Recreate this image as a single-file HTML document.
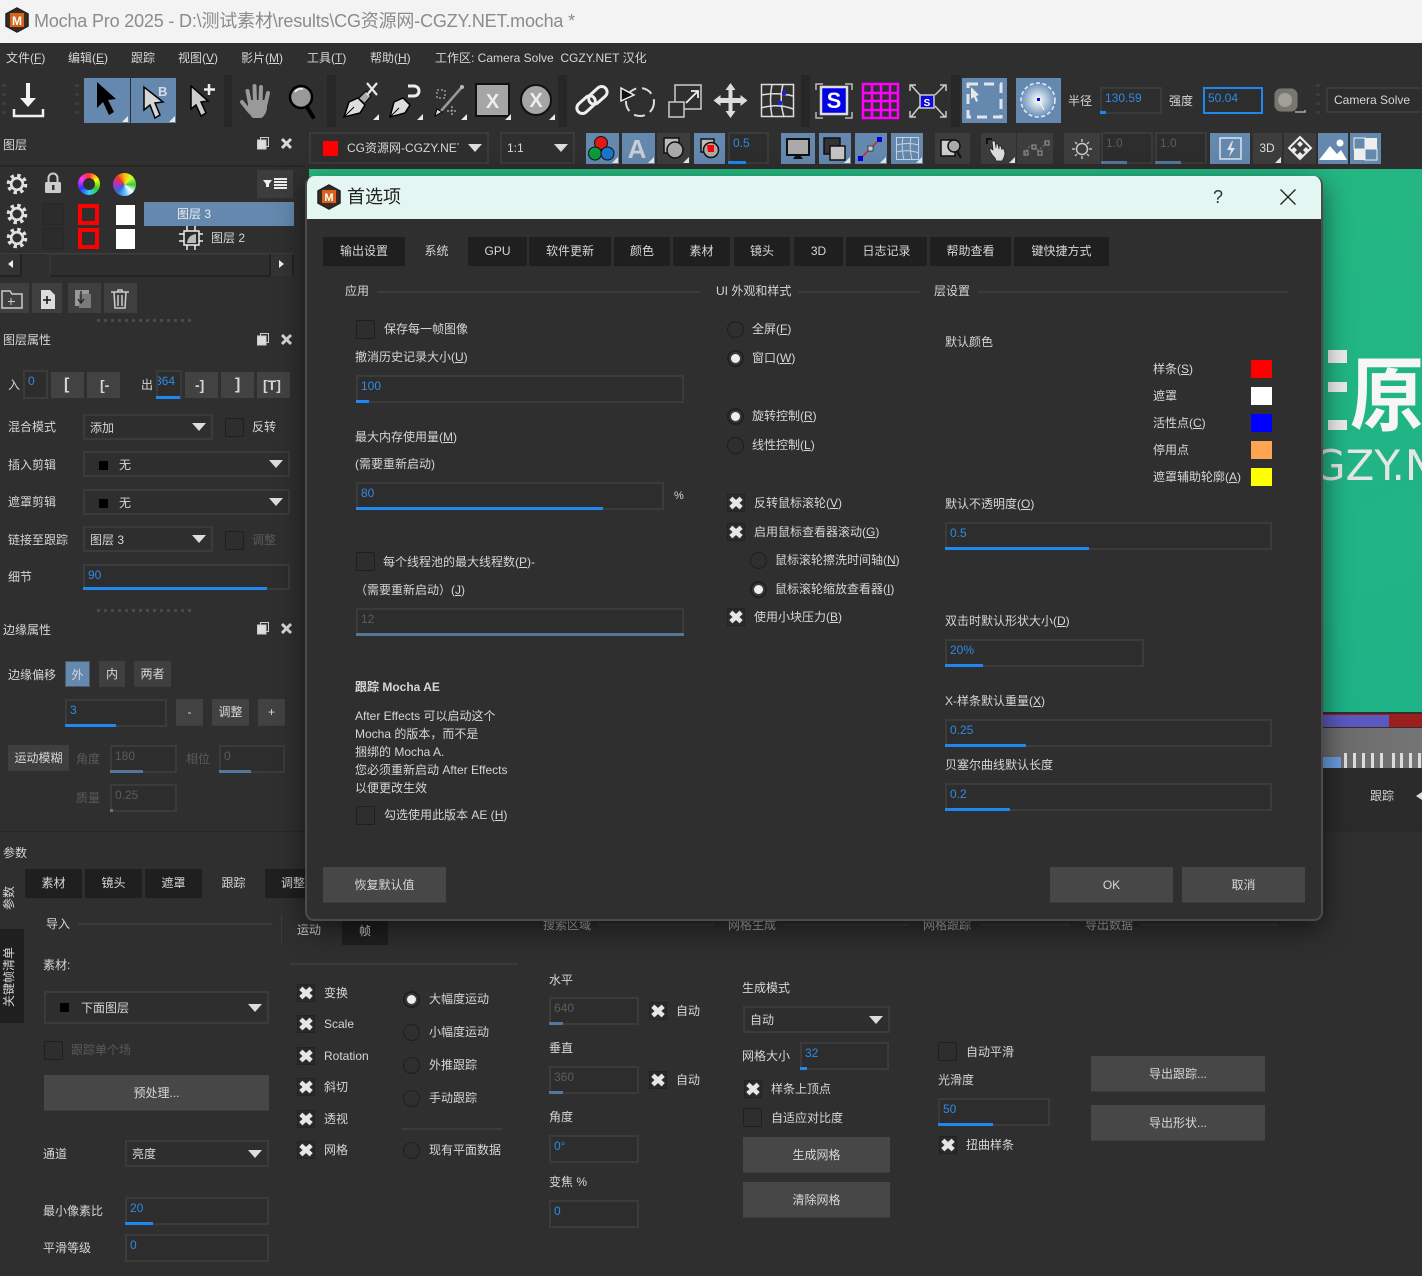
<!DOCTYPE html>
<html lang="zh">
<head>
<meta charset="utf-8">
<title>Mocha Pro 2025</title>
<style>
html,body{margin:0;padding:0;width:1422px;height:1276px;overflow:hidden;background:#2f2f2f}
body{position:relative;font-family:"Liberation Sans","Noto Sans CJK SC",sans-serif;font-size:12px;color:#d6d6d6}
.t{position:absolute;white-space:nowrap;line-height:16px;height:16px;font-size:12px;color:#d6d6d6}
.dis{color:#5a5a5a}
.f{position:absolute;box-sizing:border-box;border:2px solid #3b3b3b;background:#2d2d2d;color:#2f8ae6;font-size:12px;line-height:18px;padding-left:3px}
.f i{position:absolute;left:-2px;bottom:-2px;height:3px;background:#1e88f0;display:block}
.f.d{color:#5c5c5c}.f.d i{background:#55779c}
.dd{position:absolute;box-sizing:border-box;border:2px solid #3b3b3b;background:#2e2e2e;font-size:12px;line-height:25px;padding-left:5px;color:#d6d6d6}
.dd:after{content:"";position:absolute;right:5px;top:calc(50% - 4px);width:0;height:0;border-left:7px solid transparent;border-right:7px solid transparent;border-top:8px solid #dcdcdc}
.dd b{position:absolute;width:9px;height:9px;background:#000;left:14px;top:8px}
.cb{position:absolute;box-sizing:border-box;width:19px;height:19px;border:1px solid #1f1f1f;background:#2e2e2e;border-radius:2px}
.ck{position:absolute;width:18px;height:18px;background:#2a2a2a;border:1px solid #222;box-sizing:border-box}
.ck svg{position:absolute;left:-1px;top:-1px;width:18px;height:18px}
.r{position:absolute;box-sizing:border-box;width:17px;height:17px;border:1px solid #1f1f1f;border-radius:50%}
.r.on{border:2px solid #202020;background:#3a3a3a}
.r.on:after{content:"";position:absolute;left:2px;top:2px;width:9px;height:9px;border-radius:50%;background:#eee}
.btn{position:absolute;box-sizing:border-box;background:#474747;border-bottom:1px solid #3c3c3c;text-align:center;color:#d8d8d8;font-size:12px}
.tab{position:absolute;background:#1f1f1f;text-align:center;height:29px;line-height:29px;font-size:12px;color:#d6d6d6}
.tab.a{background:#2f2f2f}
.ln{position:absolute;height:2px;background:#3b3b3b}
.sw{position:absolute;left:1251px;width:21px;height:18px}
.grip{position:absolute;height:3px;background:repeating-linear-gradient(90deg,#4a4a4a 0 3px,transparent 3px 7px)}
u{text-underline-offset:1px}
#dlg{position:absolute;left:305px;top:176px;width:1018px;height:745px;box-sizing:border-box;background:#2f2f2f;border:2px solid #4c4c4c;border-top:0;border-radius:9px;box-shadow:0 8px 28px rgba(0,0,0,.55);overflow:hidden}
#dlg .tt{position:absolute;left:-2px;top:0;width:1018px;height:43px;background:#e3f6f1}
#dw{position:absolute;left:0;top:0;width:1422px;height:1276px}
</style>
</head>
<body>

<!-- green footage and timeline -->
<div style="position:absolute;left:309px;top:169px;width:1113px;height:543px;background:linear-gradient(160deg,#28bb80,#1eb287);overflow:hidden">
  <div style="position:absolute;left:1041px;top:166px;font-family:'Noto Sans CJK SC',sans-serif;font-size:74px;line-height:110px;color:#f6f6f6;font-weight:700;transform:scaleY(1.1)">原</div>
  <div style="position:absolute;left:1019px;top:181px;width:19px;height:13px;background:#ededed"></div>
  <div style="position:absolute;left:1019px;top:213px;width:19px;height:10px;background:#ededed"></div>
  <div style="position:absolute;left:1019px;top:251px;width:19px;height:10px;background:#ededed"></div>
  <div style="position:absolute;left:1004px;top:272px;font-family:'DejaVu Sans',sans-serif;font-size:42px;line-height:50px;color:#e6e6e6;white-space:nowrap;letter-spacing:0">GZY.NET</div>
</div>
<div style="position:absolute;left:1322px;top:712px;width:100px;height:18px;background:#3a2a2a"></div>
<div style="position:absolute;left:1322px;top:714px;width:100px;height:13px;background:#9c1f20"></div>
<div style="position:absolute;left:1322px;top:715px;width:67px;height:12px;background:#5a59c0"></div>
<div style="position:absolute;left:1322px;top:728px;width:100px;height:40px;background:linear-gradient(90deg,#6a6a6a,#757575)"></div>
<div style="position:absolute;left:1322px;top:753px;width:100px;height:15px;background:repeating-linear-gradient(90deg,transparent 0 22px,#dcdcdc 22px 25px,transparent 25px 31px,#dcdcdc 31px 34px,transparent 34px 40px,#dcdcdc 40px 43px,transparent 43px 49px,#dcdcdc 49px 52px,transparent 52px 58px,#dcdcdc 58px 61px,transparent 61px 70px,#dcdcdc 70px 73px,transparent 73px 78px,#dcdcdc 78px 81px,transparent 81px 87px,#dcdcdc 87px 90px,transparent 90px 96px,#dcdcdc 96px 99px,transparent 99px 100px)"></div>
<div style="position:absolute;left:1322px;top:757px;width:19px;height:11px;background:#6a9ce0"></div>
<div style="position:absolute;left:1322px;top:768px;width:100px;height:64px;background:#2b2b2b"></div>
<div class="t" style="left:1370px;top:788px">跟踪</div>
<div style="position:absolute;left:1416px;top:792px;width:0;height:0;border-right:6px solid #ddd;border-top:4px solid transparent;border-bottom:4px solid transparent"></div>

<!-- title bar -->
<div style="position:absolute;left:0;top:0;width:1422px;height:43px;background:#f3f3f3"></div>
<div class="t" style="left:34px;top:9px;font-size:18px;line-height:24px;height:24px;color:#8b8b8b;letter-spacing:-.18px">Mocha Pro 2025 - D:\测试素材\results\CG资源网-CGZY.NET.mocha *</div>

<!-- menu -->
<div class="t" style="left:6px;top:50px">文件(<u>F</u>)</div>
<div class="t" style="left:68px;top:50px">编辑(<u>E</u>)</div>
<div class="t" style="left:131px;top:50px">跟踪</div>
<div class="t" style="left:178px;top:50px">视图(<u>V</u>)</div>
<div class="t" style="left:241px;top:50px">影片(<u>M</u>)</div>
<div class="t" style="left:307px;top:50px">工具(<u>T</u>)</div>
<div class="t" style="left:370px;top:50px">帮助(<u>H</u>)</div>
<div class="t" style="left:435px;top:50px">工作区: Camera Solve&nbsp; CGZY.NET 汉化</div>

<!-- all icons in page coordinates -->
<svg style="position:absolute;left:0;top:0" width="1422" height="1276" viewBox="0 0 1422 1276" xmlns="http://www.w3.org/2000/svg">
<defs>
  <radialGradient id="rg"><stop offset="0" stop-color="#fff"/><stop offset="1" stop-color="#6a8fb8"/></radialGradient>
  <g id="gear"><circle r="8.6" fill="none" stroke="#e0e0e0" stroke-width="3.4" stroke-dasharray="3.4 3.35"/><circle r="5.8" fill="none" stroke="#e0e0e0" stroke-width="2.6"/></g>
  <path id="cn" d="M0 6L6 0V6Z" fill="#e8e8e8"/>
  <g id="fl"><rect x="3.5" y=".5" width="8" height="9" fill="#2f2f2f" stroke="#ccc"/><rect x=".5" y="3" width="8.5" height="9" fill="#ddd" stroke="#ccc"/></g>
  <path id="cl" d="M1 1L10 10M10 1L1 10" stroke="#d8d8d8" stroke-width="3"/>
  <path id="xm" d="M3.800 4.300L14.200 13.700M14.200 4.300L3.800 13.700" stroke="#e6e6e6" stroke-width="4.600"/>
</defs>
<!-- logo -->
<path d="M17 8L28 14V26L17 32L6 26V14Z" fill="#3a2a20" stroke="#222" stroke-width="1.500"/>
<rect x="10" y="13" width="14" height="14" fill="#d8641c"/>
<text x="17" y="25" font-family="Liberation Sans" font-size="12" font-weight="bold" fill="#fff" text-anchor="middle">M</text>

<!-- toolbar row 1 -->
<rect x="224" y="75" width="8" height="52" fill="#272727"/><rect x="327" y="75" width="9" height="52" fill="#272727"/><rect x="558" y="75" width="9" height="52" fill="#272727"/><rect x="801" y="75" width="9" height="52" fill="#272727"/><rect x="951" y="75" width="9" height="52" fill="#272727"/>
<path d="M2 84h4v3h-4zM2 93h4v3h-4zM2 102h4v3h-4zM2 111h4v3h-4zM75 84h4v3h-4zM75 93h4v3h-4zM75 102h4v3h-4zM75 111h4v3h-4zM1316 84h4v3h-4zM1316 93h4v3h-4zM1316 102h4v3h-4zM1316 111h4v3h-4z" fill="#3c3c3c"/>
<path d="M26 83h4v15h6l-8 9-8-9h6z" fill="#f2f2f2"/><path d="M14 109v7h29v-7" fill="none" stroke="#f0f0f0" stroke-width="2.500"/>
<rect x="84" y="78" width="46" height="45" fill="#6488ae"/><rect x="131" y="78" width="45" height="45" fill="#6488ae"/>
<path d="M97 82V108L103 102L109 115L114 112L108 100L116 99Z" fill="#000"/>
<path d="M144 87V110L150 105L155 118L160 115L155 103L163 102Z" fill="#d6d6d6" stroke="#000" stroke-width="1.500"/>
<text x="158" y="96" font-family="Liberation Sans" font-size="13" font-weight="bold" fill="#d6dde6">B</text>
<use href="#cn" x="122" y="116"/><use href="#cn" x="169" y="116"/>
<path d="M191 86V109L196 105L201 116L206 113L201 102L208 101Z" fill="#ccc" stroke="#000" stroke-width="1.500"/><path d="M209 84v11M204 89.500h11" stroke="#eee" stroke-width="2.500"/>
<!-- hand -->
<g stroke="#999" stroke-width="4" stroke-linecap="round" fill="none"><path d="M250 104L247.500 91"/><path d="M255 102L254.500 86"/><path d="M260.500 102L261 87"/><path d="M265.500 104L268 93"/><path d="M250 112L242 102"/></g>
<path d="M248 100H267V107C267 112 264 117 261 118H253C250 116 248 111 248 106Z" fill="#999"/>
<circle cx="301" cy="97" r="11" fill="#999" stroke="#000" stroke-width="2.500"/><path d="M295 92a8 8 0 0 1 8-3" stroke="#fff" stroke-width="1.500" fill="none"/><path d="M307 107L313 117" stroke="#000" stroke-width="4" stroke-linecap="round"/>
<!-- pens -->
<path d="M344 117L349 102L358 98L365 105L360 113Z" fill="#ddd" stroke="#000" stroke-width="1.500"/><path d="M344 117L354 107" stroke="#000"/><path d="M359 98L366 91L371 96L365 103" fill="#aaa" stroke="#000"/>
<path d="M367 83L377 95M377 83L367 95" stroke="#e8e8e8" stroke-width="2.200"/><use href="#cn" x="373" y="114"/>
<path d="M390 117L394 102L403 98L410 105L405 113Z" fill="#ddd" stroke="#000" stroke-width="1.500"/><path d="M390 117L399 108" stroke="#000"/>
<path d="M408 86h6a5 5 0 0 1 0 10h-6" fill="none" stroke="#eee" stroke-width="3"/><use href="#cn" x="417" y="114"/>
<path d="M462 87L441 111" stroke="#999" stroke-width="2.500"/><circle cx="462" cy="87" r="2" fill="#bbb"/><rect x="437" y="90" width="8" height="8" fill="none" stroke="#ccc" stroke-dasharray="2 2"/><path d="M452 106v9M447 111h10" stroke="#ddd" stroke-dasharray="2 1.500"/><path d="M435 116l2-7 5 3z" fill="#ddd" stroke="#000"/><use href="#cn" x="461" y="114"/>
<rect x="476" y="84" width="33" height="32" fill="#a5a5a5" stroke="#111" stroke-width="2"/><text x="492.500" y="108" font-family="Liberation Sans" font-size="20" font-weight="bold" fill="#eee" text-anchor="middle">X</text><use href="#cn" x="505" y="114"/>
<circle cx="536" cy="100" r="15" fill="#a5a5a5" stroke="#111" stroke-width="2"/><text x="536" y="107" font-family="Liberation Sans" font-size="20" font-weight="bold" fill="#eee" text-anchor="middle">X</text><use href="#cn" x="549" y="114"/>
<g transform="rotate(-42 592 100)" fill="none" stroke="#eee" stroke-width="3"><rect x="574" y="94" width="21" height="11" rx="5.500"/><rect x="589" y="95" width="21" height="11" rx="5.500"/></g>
<circle cx="640" cy="102" r="14" fill="none" stroke="#ddd" stroke-width="2" stroke-dasharray="11 6"/><path d="M621 88L634 95L621 101Z" fill="#111" stroke="#eee" stroke-width="1.500"/>
<rect x="675" y="85" width="26" height="24" fill="none" stroke="#ccc" stroke-width="1.500"/><rect x="669" y="102" width="15" height="15" fill="#2f2f2f" stroke="#ccc" stroke-width="1.500"/><path d="M686 103L697 92M691 91h7v7" fill="none" stroke="#eee" stroke-width="1.800"/>
<path d="M730.500 83l5 7h-3v8h8v-3l7 5.500-7 5.500v-3h-8v8h3l-5 7-5-7h3v-8h-8v3l-7-5.500 7-5.500v3h8v-8h-3z" fill="#ddd"/>
<g fill="none" stroke="#ddd" stroke-width="1.500"><rect x="761.500" y="84.500" width="32" height="32"/><path d="M761 95Q778 92 793 96M761 108Q778 103 793 109M772 84Q769 100 772 117M783 84Q779 100 784 117"/></g><rect x="782" y="91" width="4" height="4" fill="#1a1aff"/><rect x="778" y="101" width="4" height="4" fill="#1a1aff"/>
<!-- S tools -->
<path d="M816 90v-6h7M845 84h7v6M852 112v6h-7M823 118h-7v-6" fill="none" stroke="#bbb" stroke-width="1.500"/><rect x="821" y="87" width="26" height="27" fill="#0000e6" stroke="#ddd" stroke-width="2.500"/><text x="834" y="108" font-family="Liberation Sans" font-size="22" font-weight="bold" fill="#fff" text-anchor="middle">S</text>
<g fill="none" stroke="#f0f" stroke-width="2.500"><rect x="863" y="84" width="35" height="34"/><path d="M872 84v34M881 84v34M890 84v34M863 93h35M863 101h35M863 110h35"/></g>
<path d="M911 85L920 95M945 85L935 95M911 117L920 106M945 117L935 106M910 91v-6h6M940 85h6v6M946 111v6h-6M916 117h-6v-6" fill="none" stroke="#ccc" stroke-width="1.500"/><rect x="920" y="95" width="14" height="13" fill="#0a0adc" stroke="#ccc" stroke-width="1.500"/><text x="927" y="106" font-family="Liberation Sans" font-size="10" font-weight="bold" fill="#fff" text-anchor="middle">S</text>
<rect x="962" y="78" width="45" height="45" fill="#6488ae"/><rect x="968" y="84" width="33" height="33" fill="none" stroke="#dfe6ee" stroke-width="3" stroke-dasharray="10 6"/><path d="M971 87V99L974 97L976 102L978 101L976 96L979 95Z" fill="#e8e8e8"/>
<rect x="1016" y="78" width="45" height="45" fill="#6488ae"/><circle cx="1038" cy="100" r="17" fill="url(#rg)" stroke="#e8eef5" stroke-width="1.500" stroke-dasharray="4 2.500"/><rect x="1037" y="98" width="3" height="3" fill="#0000e0"/><path d="M1039 101l5 9" stroke="#fff" stroke-width="1"/>
<rect x="1274" y="88" width="24" height="24" rx="7" fill="#77776f" stroke="#333"/><circle cx="1285" cy="100" r="7" fill="#a0a098"/><path d="M1295 112h10v-2" fill="none" stroke="#aaa" stroke-width="1.500"/>

<!-- row 2 buttons -->
<g fill="#6488ae"><rect x="586" y="133" width="33" height="31"/><rect x="622" y="133" width="33" height="31"/><rect x="694" y="133" width="31" height="31"/><rect x="781" y="133" width="34" height="31"/><rect x="819" y="133" width="32" height="31"/><rect x="855" y="133" width="32" height="31"/><rect x="891" y="133" width="32" height="31"/><rect x="1210" y="133" width="40" height="31"/><rect x="1318" y="133" width="30" height="31"/><rect x="1350" y="133" width="31" height="31"/></g>
<g fill="#3d3d3d"><rect x="657" y="133" width="33" height="31"/><rect x="935" y="133" width="35" height="31"/><rect x="981" y="133" width="35" height="31"/><rect x="1017" y="133" width="36" height="31"/><rect x="1064" y="133" width="36" height="31"/><rect x="1253" y="133" width="29" height="31"/><rect x="1284" y="133" width="32" height="31"/></g>
<circle cx="601" cy="143" r="6.500" fill="#e01818" stroke="#111"/><circle cx="595" cy="153.500" r="6.500" fill="#0c9a3e" stroke="#111"/><circle cx="607.500" cy="153.500" r="6.500" fill="#1b74c8" stroke="#111"/><use href="#cn" x="612" y="157"/>
<text x="637" y="158" font-family="Liberation Sans" font-size="26" font-weight="bold" fill="#c9ced4" text-anchor="middle">A</text><use href="#cn" x="648" y="157"/>
<rect x="664" y="138" width="15" height="15" fill="#bbb" stroke="#111" stroke-width="1.500"/><circle cx="675" cy="150" r="8" fill="#aaa" stroke="#111" stroke-width="1.500"/><use href="#cn" x="683" y="157"/>
<rect x="701" y="139" width="13" height="13" fill="#bbb" stroke="#111" stroke-width="1.500"/><circle cx="711" cy="150" r="7.500" fill="#aaa" stroke="#111" stroke-width="1.500"/><path d="M707 145h7v7h-6z" fill="#f00"/>
<rect x="787" y="139" width="22" height="16" fill="#aaa" stroke="#111" stroke-width="2"/><path d="M796 155h4l3 4h-10z" fill="#111"/>
<rect x="824" y="138" width="16" height="16" fill="#333" stroke="#111" stroke-width="1.500"/><rect x="830" y="146" width="15" height="14" fill="#c4c4c4" stroke="#111" stroke-width="1.500"/><use href="#cn" x="844" y="157"/>
<path d="M861 158L879 140" stroke="#e02020" stroke-width="1.500"/><rect x="858" y="156" width="5" height="5" fill="#0000e0"/><rect x="877" y="137" width="5" height="5" fill="#0000e0"/><rect x="868" y="146" width="5" height="5" fill="#ccc" stroke="#222" stroke-width=".7"/><use href="#cn" x="880" y="157"/>
<g fill="none" stroke="#c8d2dc"><rect x="896.500" y="137.500" width="22" height="22"/><path d="M896 145Q908 142 919 145M896 152Q908 149 919 153M903 137Q901 148 904 160M911 137Q909 148 912 160"/></g><use href="#cn" x="916" y="157"/>
<rect x="941" y="140" width="14" height="16" fill="#ccc" stroke="#111" stroke-width="1.500"/><circle cx="954" cy="146" r="6" fill="#aaa" stroke="#111" stroke-width="1.500"/><path d="M957 151l4 7" stroke="#111" stroke-width="2"/>
<path d="M986 138h6v2h-4v4h-2z" fill="#111"/><path d="M995 158C991 154 989 150 990 148L993 150L992 141H995L996 148V144H998L999 149V146H1001L1002 150V148L1004 149L1005 153C1005 156 1003 160 1002 161H996Z" fill="#ddd" stroke="#222" stroke-width=".8"/><use href="#cn" x="1009" y="157"/>
<path d="M1025 154Q1030 142 1034 148T1047 141" fill="none" stroke="#777" stroke-dasharray="2 1.500"/><g fill="none" stroke="#999"><rect x="1024" y="151" width="4" height="4"/><rect x="1032" y="145" width="4" height="4"/><rect x="1038" y="151" width="4" height="4"/><rect x="1045" y="141" width="4" height="4"/></g>
<circle cx="1082" cy="149" r="5.500" fill="none" stroke="#ccc" stroke-width="1.500"/><path d="M1082 139v3M1082 156v3M1072 149h3M1089 149h3M1075 142l2 2M1087 154l2 2M1089 142l-2 2M1077 154l-2 2" stroke="#bbb" stroke-width="1.500"/>
<rect x="1220" y="138" width="21" height="21" fill="none" stroke="#dce4ec" stroke-width="1.500"/><path d="M1232 141l-5 9h4l-2 7 6-9h-4l2-7z" fill="#dce4ec"/>
<text x="1267" y="152" font-family="Liberation Sans" font-size="12" fill="#ddd" text-anchor="middle">3D</text><use href="#cn" x="1275" y="157"/>
<path d="M1300 137L1311 148L1300 159L1289 148Z" fill="none" stroke="#eee" stroke-width="2"/><path d="M1300 141l3 3-3 3-3-3zM1294 147l3 3-3 3-3-3zM1306 147l3 3-3 3-3-3zM1300 152l3 3-3 3-3-3z" fill="#eee"/>
<path d="M1319 160L1330 146L1337 154L1341 150L1347 160Z" fill="#fff"/><circle cx="1340" cy="143" r="3.500" fill="#fff"/>
<rect x="1354" y="138" width="23" height="22" fill="#eee"/><rect x="1354" y="138" width="11" height="11" fill="#6488ae" stroke="#eee"/><rect x="1365" y="149" width="12" height="11" fill="#6488ae" stroke="#eee"/>

<!-- left panel icons -->
<use href="#fl" x="257" y="137"/><use href="#cl" x="281" y="138"/><use href="#fl" x="257" y="333"/><use href="#cl" x="281" y="334"/><use href="#fl" x="257" y="622"/><use href="#cl" x="281" y="623"/>
<use href="#gear" x="17" y="184"/><use href="#gear" x="17" y="214"/><use href="#gear" x="17" y="238"/>
<path d="M48.500 182v-4a4.500 4.500 0 0 1 9 0v4" fill="none" stroke="#ccc" stroke-width="2"/><rect x="45" y="182" width="16" height="11" rx="1.500" fill="#ccc"/><rect x="52" y="185" width="2.500" height="5" fill="#333"/>
<rect x="257" y="170" width="36" height="28" fill="#3d3d3d"/><path d="M263 180h9l-3 4v3h-3v-3z" fill="#eee"/><path d="M274 179h13M274 182h13M274 185h13M274 188h13" stroke="#eee" stroke-width="2"/>
<rect x="43" y="204" width="20" height="21" fill="#2c2c2c" stroke="#262626"/><rect x="43" y="228" width="20" height="21" fill="#2c2c2c" stroke="#262626"/>
<rect x="80" y="206" width="17" height="17" fill="none" stroke="#f00" stroke-width="4"/><rect x="80" y="230" width="17" height="17" fill="none" stroke="#f00" stroke-width="4"/>
<rect x="116" y="205" width="19" height="20" fill="#fff"/><rect x="116" y="229" width="19" height="20" fill="#fff"/>
<rect x="144" y="202" width="150" height="24" fill="#6488ae"/>
<rect x="184" y="231" width="15" height="14" fill="#2a2a2a" stroke="#eee" stroke-width="1.500"/><path d="M187 243Q188 235 196 234V243Z" fill="#bbb"/><path d="M179 234h5M179 241h5M199 234h4M199 241h4M187 226v5M195 226v5M187 245v5M195 245v5" stroke="#eee" stroke-width="1.500"/>
<rect x="0" y="253" width="294" height="1" fill="#3d3d3d"/><rect x="0" y="254" width="21" height="22" fill="#333"/><rect x="50" y="254" width="220" height="22" fill="#2e2e2e" stroke="#3d3d3d"/><rect x="271" y="254" width="22" height="22" fill="#333"/>
<path d="M21 254v22M50 276h220M270 254v22M293 254v22M0 276h21" stroke="#151515"/><path d="M13 260v8l-5-4zM279 260v8l5-4z" fill="#eee"/>
<g fill="#3f3f3f"><rect x="0" y="283" width="29" height="30"/><rect x="32" y="283" width="30" height="30"/><rect x="68" y="283" width="33" height="30"/><rect x="104" y="283" width="33" height="30"/></g>
<path d="M2 291h8l2 3h10v14H2z" fill="none" stroke="#ccc" stroke-width="1.500"/><path d="M11 298v7M8 301.500h7" stroke="#ccc"/>
<path d="M41 290h9l5 5v14H41z" fill="#ddd"/><path d="M47 296v8M43 300h8" stroke="#111" stroke-width="1.500"/>
<rect x="75" y="290" width="14" height="16" fill="#999"/><rect x="79" y="294" width="12" height="14" fill="#7a7a7a"/><path d="M81 291v11M78 299l3 4 3-4" fill="none" stroke="#222" stroke-width="1.300"/>
<path d="M111 292h18M114 292l1 16h10l1-16M118 292v-2h4v2M118 295v11M122 295v11" fill="none" stroke="#ccc" stroke-width="1.500"/>
<g fill="#424242"><rect x="51" y="372" width="33" height="26"/><rect x="87" y="372" width="33" height="26"/><rect x="185" y="372" width="33" height="26"/><rect x="221" y="372" width="33" height="26"/><rect x="257" y="372" width="33" height="26"/></g>
<rect x="0" y="165" width="305" height="2" fill="#262626"/>
<rect x="0" y="831" width="1422" height="1" fill="#282828"/>
</svg>

<!-- conic colour icons -->
<div style="position:absolute;left:78px;top:173px;width:22px;height:22px;border-radius:50%;background:conic-gradient(#f33,#ff0,#3c3,#3cf,#33f,#f3f,#f33)"><div style="position:absolute;left:5px;top:5px;width:12px;height:12px;border-radius:50%;background:#2f2f2f"></div></div>
<div style="position:absolute;left:113px;top:173px;width:23px;height:23px;border-radius:50%;background:conic-gradient(#fb0,#cf3,#3c3,#fff,#5bf,#36c,#a3c,#e33,#fb0)"></div>

<!-- toolbar text fields -->
<div class="t" style="left:1068px;top:93px">半径</div>
<div class="f" style="left:1100px;top:87px;width:62px;height:27px">130.59<i style="width:6px"></i></div>
<div class="t" style="left:1169px;top:93px">强度</div>
<div class="f" style="left:1203px;top:87px;width:60px;height:27px;border-color:#1e88f0">50.04</div>
<div class="f" style="left:1326px;top:87px;width:110px;height:26px;color:#d6d6d6;padding-left:6px;line-height:22px">Camera Solve</div>
<div class="t" style="left:3px;top:137px">图层</div>
<div class="dd" style="left:309px;top:132px;width:180px;height:32px;padding-left:36px;line-height:28px"><span style="display:block;width:112px;overflow:hidden;white-space:nowrap">CG资源网-CGZY.NET</span></div>
<div style="position:absolute;left:323px;top:141px;width:15px;height:15px;background:#f00"></div>
<div class="dd" style="left:500px;top:132px;width:75px;height:32px;line-height:28px">1:1</div>
<div class="f" style="left:728px;top:132px;width:41px;height:32px">0.5<i style="width:18px"></i></div>
<div class="f d" style="left:1101px;top:132px;width:52px;height:32px">1.0<i style="width:26px"></i></div>
<div class="f d" style="left:1155px;top:132px;width:52px;height:32px">1.0<i style="width:26px"></i></div>

<!-- layer list -->
<div class="t" style="left:177px;top:206px;color:#eee">图层 3</div>
<div class="t" style="left:211px;top:230px">图层 2</div>
<div class="grip" style="left:97px;top:319px;width:94px"></div>
<div class="grip" style="left:97px;top:609px;width:94px"></div>

<!-- layer properties -->
<div class="t" style="left:3px;top:332px">图层属性</div>
<div class="t" style="left:8px;top:377px">入</div>
<div class="f" style="left:23px;top:370px;width:25px;height:29px">0</div>
<div class="t" style="left:64px;top:377px;font-weight:bold;font-size:16px">[</div>
<div class="t" style="left:100px;top:377px;font-weight:bold;font-size:14px">[-</div>
<div class="t" style="left:141px;top:377px">出</div>
<div class="f" style="left:156px;top:370px;width:26px;height:29px;padding-left:0"><span style="display:block;overflow:hidden;text-indent:-3px">364</span><i style="width:24px"></i></div>
<div class="t" style="left:195px;top:377px;font-weight:bold;font-size:14px">-]</div>
<div class="t" style="left:235px;top:377px;font-weight:bold;font-size:16px">]</div>
<div class="t" style="left:263px;top:377px;font-weight:bold;font-size:14px">[T]</div>

<div class="t" style="left:8px;top:419px">混合模式</div>
<div class="dd" style="left:83px;top:414px;width:130px;height:26px">添加</div>
<div class="cb" style="left:225px;top:418px"></div><div class="t" style="left:252px;top:419px">反转</div>
<div class="t" style="left:8px;top:457px">插入剪辑</div>
<div class="dd" style="left:83px;top:451px;width:207px;height:26px;padding-left:34px"><b></b>无</div>
<div class="t" style="left:8px;top:494px">遮罩剪辑</div>
<div class="dd" style="left:83px;top:489px;width:207px;height:26px;padding-left:34px"><b></b>无</div>
<div class="t" style="left:8px;top:532px">链接至跟踪</div>
<div class="dd" style="left:83px;top:526px;width:130px;height:26px">图层 3</div>
<div class="cb" style="left:225px;top:531px"></div><div class="t dis" style="left:252px;top:532px">调整</div>
<div class="t" style="left:8px;top:569px">细节</div>
<div class="f" style="left:83px;top:564px;width:207px;height:26px">90<i style="width:184px"></i></div>

<!-- edge properties -->
<div class="t" style="left:3px;top:622px">边缘属性</div>
<div class="t" style="left:8px;top:667px">边缘偏移</div>
<div class="btn" style="left:65px;top:661px;width:25px;height:26px;line-height:26px;background:#6488ae;border:1px solid #4a5a6c">外</div>
<div class="btn" style="left:99px;top:661px;width:26px;height:26px;line-height:26px;background:#3f3f3f">内</div>
<div class="btn" style="left:134px;top:661px;width:37px;height:26px;line-height:26px;background:#3f3f3f">两者</div>
<div class="f" style="left:65px;top:699px;width:102px;height:28px">3<i style="width:51px"></i></div>
<div class="btn" style="left:176px;top:699px;width:27px;height:27px;line-height:27px;background:#424242">-</div>
<div class="btn" style="left:212px;top:699px;width:37px;height:27px;line-height:27px;background:#424242">调整</div>
<div class="btn" style="left:258px;top:699px;width:27px;height:27px;line-height:27px;background:#424242">+</div>
<div class="btn" style="left:8px;top:745px;width:61px;height:26px;line-height:26px;background:#3f3f3f">运动模糊</div>
<div class="t dis" style="left:76px;top:751px">角度</div>
<div class="f d" style="left:110px;top:745px;width:67px;height:28px">180<i style="width:33px"></i></div>
<div class="t dis" style="left:186px;top:751px">相位</div>
<div class="f d" style="left:219px;top:745px;width:66px;height:28px">0<i style="width:32px"></i></div>
<div class="t dis" style="left:76px;top:790px">质量</div>
<div class="f d" style="left:110px;top:784px;width:67px;height:28px">0.25<i style="width:3px"></i></div>

<!-- params -->
<div class="t" style="left:3px;top:845px">参数</div>
<div class="tab" style="left:25px;top:869px;width:57px">素材</div>
<div class="tab" style="left:85px;top:869px;width:57px">镜头</div>
<div class="tab" style="left:145px;top:869px;width:57px">遮罩</div>
<div class="tab a" style="left:205px;top:869px;width:57px">跟踪</div>
<div class="tab" style="left:265px;top:869px;width:60px;text-align:left;padding-left:16px;box-sizing:border-box">调整</div>
<div class="t" style="left:-3px;top:890px;width:24px;transform:rotate(-90deg);text-align:center">参数</div>
<div style="position:absolute;left:0;top:929px;width:24px;height:94px;background:#1f1f1f"></div>
<div class="t" style="left:-21px;top:969px;width:60px;transform:rotate(-90deg);text-align:center">关键帧清单</div>

<div class="t" style="left:46px;top:916px">导入</div><div class="ln" style="left:78px;top:923px;width:194px"></div>
<div class="t" style="left:43px;top:957px">素材:</div>
<div class="dd" style="left:44px;top:991px;width:225px;height:33px;padding-left:35px;line-height:31px"><b style="left:14px;top:10px"></b>下面图层</div>
<div class="cb" style="left:44px;top:1041px"></div><div class="t dis" style="left:71px;top:1042px">跟踪单个场</div>
<div class="btn" style="left:44px;top:1075px;width:225px;height:36px;line-height:36px">预处理...</div>
<div class="t" style="left:43px;top:1146px">通道</div>
<div class="dd" style="left:125px;top:1140px;width:144px;height:27px">亮度</div>
<div class="t" style="left:43px;top:1203px">最小像素比</div>
<div class="f" style="left:125px;top:1197px;width:144px;height:28px">20<i style="width:28px"></i></div>
<div class="t" style="left:43px;top:1240px">平滑等级</div>
<div class="f" style="left:125px;top:1234px;width:144px;height:28px">0</div>

<div style="position:absolute;left:281px;top:915px;width:59px;height:30px;background:#2f2f2f;border-left:1px solid #3b3b3b;box-sizing:border-box"></div>
<div class="t" style="left:297px;top:922px;color:#ccc">运动</div>
<div class="tab" style="left:342px;top:921px;width:46px;height:24px;line-height:20px">帧</div>
<div class="ln" style="left:290px;top:963px;width:228px"></div>

<div class="ck" style="left:297px;top:984px"><svg viewBox="0 0 18 18"><use href="#xm"/></svg></div><div class="t" style="left:324px;top:985px">变换</div>
<div class="ck" style="left:297px;top:1015px"><svg viewBox="0 0 18 18"><use href="#xm"/></svg></div><div class="t" style="left:324px;top:1016px">Scale</div>
<div class="ck" style="left:297px;top:1047px"><svg viewBox="0 0 18 18"><use href="#xm"/></svg></div><div class="t" style="left:324px;top:1048px">Rotation</div>
<div class="ck" style="left:297px;top:1078px"><svg viewBox="0 0 18 18"><use href="#xm"/></svg></div><div class="t" style="left:324px;top:1079px">斜切</div>
<div class="ck" style="left:297px;top:1110px"><svg viewBox="0 0 18 18"><use href="#xm"/></svg></div><div class="t" style="left:324px;top:1111px">透视</div>
<div class="ck" style="left:297px;top:1141px"><svg viewBox="0 0 18 18"><use href="#xm"/></svg></div><div class="t" style="left:324px;top:1142px">网格</div>

<div class="r on" style="left:403px;top:991px"></div><div class="t" style="left:429px;top:991px">大幅度运动</div>
<div class="r" style="left:403px;top:1024px"></div><div class="t" style="left:429px;top:1024px">小幅度运动</div>
<div class="r" style="left:403px;top:1057px"></div><div class="t" style="left:429px;top:1057px">外推跟踪</div>
<div class="r" style="left:403px;top:1090px"></div><div class="t" style="left:429px;top:1090px">手动跟踪</div>
<div class="ln" style="left:402px;top:1128px;width:100px"></div>
<div class="r" style="left:403px;top:1142px"></div><div class="t" style="left:429px;top:1142px">现有平面数据</div>

<div class="t" style="left:543px;top:917px;color:#aaa">搜索区域</div><div class="ln" style="left:598px;top:924px;width:116px"></div>
<div class="t" style="left:728px;top:917px;color:#aaa">网格生成</div><div class="ln" style="left:785px;top:924px;width:124px"></div>
<div class="t" style="left:923px;top:917px;color:#aaa">网格跟踪</div><div class="ln" style="left:980px;top:924px;width:90px"></div>
<div class="t" style="left:1085px;top:917px;color:#aaa">导出数据</div><div class="ln" style="left:1140px;top:924px;width:138px"></div>

<div class="t" style="left:549px;top:972px">水平</div>
<div class="f d" style="left:549px;top:997px;width:90px;height:28px">640<i style="width:14px"></i></div>
<div class="ck" style="left:649px;top:1002px"><svg viewBox="0 0 18 18"><use href="#xm"/></svg></div><div class="t" style="left:676px;top:1003px">自动</div>
<div class="t" style="left:549px;top:1040px">垂直</div>
<div class="f d" style="left:549px;top:1066px;width:90px;height:28px">360<i style="width:14px"></i></div>
<div class="ck" style="left:649px;top:1071px"><svg viewBox="0 0 18 18"><use href="#xm"/></svg></div><div class="t" style="left:676px;top:1072px">自动</div>
<div class="t" style="left:549px;top:1109px">角度</div>
<div class="f" style="left:549px;top:1135px;width:90px;height:28px">0°</div>
<div class="t" style="left:549px;top:1174px">变焦 %</div>
<div class="f" style="left:549px;top:1200px;width:90px;height:28px">0</div>

<div class="t" style="left:742px;top:980px">生成模式</div>
<div class="dd" style="left:743px;top:1006px;width:147px;height:27px">自动</div>
<div class="t" style="left:742px;top:1048px">网格大小</div>
<div class="f" style="left:800px;top:1042px;width:89px;height:28px">32<i style="width:7px"></i></div>
<div class="ck" style="left:744px;top:1080px"><svg viewBox="0 0 18 18"><use href="#xm"/></svg></div><div class="t" style="left:771px;top:1081px">样条上顶点</div>
<div class="cb" style="left:743px;top:1108px"></div><div class="t" style="left:771px;top:1110px">自适应对比度</div>
<div class="btn" style="left:743px;top:1137px;width:147px;height:36px;line-height:36px">生成网格</div>
<div class="btn" style="left:743px;top:1182px;width:147px;height:36px;line-height:36px">清除网格</div>

<div class="cb" style="left:938px;top:1042px"></div><div class="t" style="left:966px;top:1044px">自动平滑</div>
<div class="t" style="left:938px;top:1072px">光滑度</div>
<div class="f" style="left:938px;top:1098px;width:112px;height:28px">50<i style="width:55px"></i></div>
<div class="ck" style="left:939px;top:1136px"><svg viewBox="0 0 18 18"><use href="#xm"/></svg></div><div class="t" style="left:966px;top:1137px">扭曲样条</div>
<div class="btn" style="left:1091px;top:1056px;width:174px;height:36px;line-height:36px">导出跟踪...</div>
<div class="btn" style="left:1091px;top:1105px;width:174px;height:36px;line-height:36px">导出形状...</div>

<!-- dialog -->
<div id="dlg"><div class="tt"></div></div>
<div id="dw">
  <svg style="position:absolute;left:0;top:0" width="1422" height="240" viewBox="0 0 1422 240">
    <path d="M329 185L340 191V203L329 209L318 203V191Z" fill="#3a2a20" stroke="#222" stroke-width="1.500"/>
    <rect x="322" y="190" width="14" height="13" fill="#d8641c"/>
    <text x="329" y="201" font-family="Liberation Sans" font-size="11" font-weight="bold" fill="#fff" text-anchor="middle">M</text>
    <path d="M1280.500 189.500L1295.500 204.500M1295.500 189.500L1280.500 204.500" stroke="#222" stroke-width="1.300"/>
  </svg>
  <div class="t" style="left:347px;top:185px;font-size:18px;line-height:24px;height:24px;color:#222">首选项</div>
  <div class="t" style="left:1213px;top:186px;font-size:18px;line-height:22px;height:22px;color:#333">?</div>

  <div class="tab" style="left:323px;top:237px;width:82px">输出设置</div>
  <div class="tab a" style="left:408px;top:237px;width:57px">系统</div>
  <div class="tab" style="left:468px;top:237px;width:59px">GPU</div>
  <div class="tab" style="left:529px;top:237px;width:82px">软件更新</div>
  <div class="tab" style="left:614px;top:237px;width:56px">颜色</div>
  <div class="tab" style="left:673px;top:237px;width:57px">素材</div>
  <div class="tab" style="left:734px;top:237px;width:56px">镜头</div>
  <div class="tab" style="left:794px;top:237px;width:49px">3D</div>
  <div class="tab" style="left:846px;top:237px;width:81px">日志记录</div>
  <div class="tab" style="left:930px;top:237px;width:81px">帮助查看</div>
  <div class="tab" style="left:1014px;top:237px;width:95px">键快捷方式</div>

  <div class="t" style="left:345px;top:283px">应用</div><div class="ln" style="left:377px;top:291px;width:323px"></div>
  <div class="t" style="left:716px;top:283px">UI 外观和样式</div><div class="ln" style="left:798px;top:291px;width:122px"></div>
  <div class="t" style="left:934px;top:283px">层设置</div><div class="ln" style="left:978px;top:291px;width:310px"></div>

  <div class="cb" style="left:356px;top:320px"></div><div class="t" style="left:384px;top:321px">保存每一帧图像</div>
  <div class="t" style="left:355px;top:349px">撤消历史记录大小(<u>U</u>)</div>
  <div class="f" style="left:356px;top:375px;width:328px;height:28px">100<i style="width:13px"></i></div>
  <div class="t" style="left:355px;top:429px">最大内存使用量(<u>M</u>)</div>
  <div class="t" style="left:355px;top:456px">(需要重新启动)</div>
  <div class="f" style="left:356px;top:482px;width:308px;height:28px">80<i style="width:247px"></i></div>
  <div class="t" style="left:674px;top:488px;font-size:11px">%</div>
  <div class="cb" style="left:356px;top:552px"></div><div class="t" style="left:383px;top:554px">每个线程池的最大线程数(<u>P</u>)-</div>
  <div class="t" style="left:355px;top:582px">（需要重新启动）(<u>J</u>)</div>
  <div class="f d" style="left:356px;top:608px;width:328px;height:28px">12<i style="width:328px"></i></div>
  <div class="t" style="left:355px;top:679px;font-weight:bold">跟踪 Mocha AE</div>
  <div class="t" style="left:355px;top:708px">After Effects 可以启动这个</div>
  <div class="t" style="left:355px;top:726px">Mocha 的版本，而不是</div>
  <div class="t" style="left:355px;top:744px">捆绑的 Mocha A.</div>
  <div class="t" style="left:355px;top:762px">您必须重新启动 After Effects</div>
  <div class="t" style="left:355px;top:780px">以便更改生效</div>
  <div class="cb" style="left:356px;top:806px"></div><div class="t" style="left:384px;top:807px">勾选使用此版本 AE (<u>H</u>)</div>

  <div class="r" style="left:727px;top:321px"></div><div class="t" style="left:752px;top:321px">全屏(<u>F</u>)</div>
  <div class="r on" style="left:727px;top:350px"></div><div class="t" style="left:752px;top:350px">窗口(<u>W</u>)</div>
  <div class="r on" style="left:727px;top:408px"></div><div class="t" style="left:752px;top:408px">旋转控制(<u>R</u>)</div>
  <div class="r" style="left:727px;top:437px"></div><div class="t" style="left:752px;top:437px">线性控制(<u>L</u>)</div>
  <div class="ck" style="left:727px;top:494px"><svg viewBox="0 0 18 18"><use href="#xm"/></svg></div><div class="t" style="left:754px;top:495px">反转鼠标滚轮(<u>V</u>)</div>
  <div class="ck" style="left:727px;top:523px"><svg viewBox="0 0 18 18"><use href="#xm"/></svg></div><div class="t" style="left:754px;top:524px">启用鼠标查看器滚动(<u>G</u>)</div>
  <div class="r" style="left:750px;top:552px"></div><div class="t" style="left:775px;top:552px">鼠标滚轮擦洗时间轴(<u>N</u>)</div>
  <div class="r on" style="left:750px;top:581px"></div><div class="t" style="left:775px;top:581px">鼠标滚轮缩放查看器(<u>I</u>)</div>
  <div class="ck" style="left:727px;top:608px"><svg viewBox="0 0 18 18"><use href="#xm"/></svg></div><div class="t" style="left:754px;top:609px">使用小块压力(<u>B</u>)</div>

  <div class="t" style="left:945px;top:334px">默认颜色</div>
  <div class="t" style="left:1153px;top:361px">样条(<u>S</u>)</div><div class="sw" style="top:360px;background:#f00"></div>
  <div class="t" style="left:1153px;top:388px">遮罩</div><div class="sw" style="top:387px;background:#fff"></div>
  <div class="t" style="left:1153px;top:415px">活性点(<u>C</u>)</div><div class="sw" style="top:414px;background:#00f"></div>
  <div class="t" style="left:1153px;top:442px">停用点</div><div class="sw" style="top:441px;background:#ffa552"></div>
  <div class="t" style="left:1153px;top:469px">遮罩辅助轮廓(<u>A</u>)</div><div class="sw" style="top:468px;background:#ff0"></div>
  <div class="t" style="left:945px;top:496px">默认不透明度(<u>O</u>)</div>
  <div class="f" style="left:945px;top:522px;width:327px;height:28px">0.5<i style="width:144px"></i></div>
  <div class="t" style="left:945px;top:613px">双击时默认形状大小(<u>D</u>)</div>
  <div class="f" style="left:945px;top:639px;width:199px;height:28px">20%<i style="width:38px"></i></div>
  <div class="t" style="left:945px;top:693px">X-样条默认重量(<u>X</u>)</div>
  <div class="f" style="left:945px;top:719px;width:327px;height:28px">0.25<i style="width:81px"></i></div>
  <div class="t" style="left:945px;top:757px">贝塞尔曲线默认长度</div>
  <div class="f" style="left:945px;top:783px;width:327px;height:28px">0.2<i style="width:65px"></i></div>

  <div class="btn" style="left:323px;top:867px;width:123px;height:36px;line-height:36px">恢复默认值</div>
  <div class="btn" style="left:1050px;top:867px;width:123px;height:36px;line-height:36px">OK</div>
  <div class="btn" style="left:1182px;top:867px;width:123px;height:36px;line-height:36px">取消</div>
</div>
</body>
</html>
